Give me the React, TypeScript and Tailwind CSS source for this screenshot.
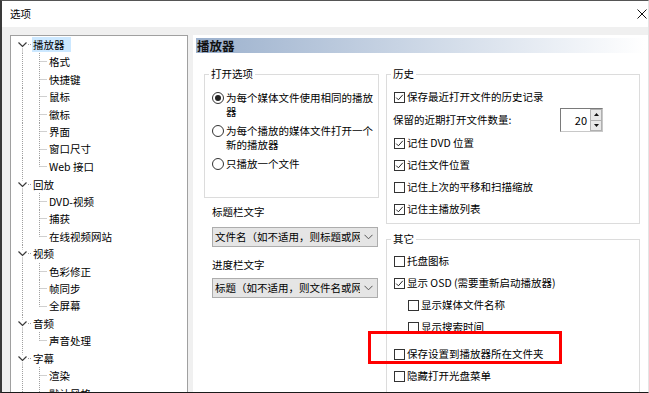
import React from 'react';

type TreeItem = { label: string; level: 0 | 1; first?: boolean; last?: boolean; selected?: boolean };

const ROW_H = 17.45;

const tree: TreeItem[] = [
  { label: '播放器', level: 0, first: true, selected: true },
  { label: '格式', level: 1 },
  { label: '快捷键', level: 1 },
  { label: '鼠标', level: 1 },
  { label: '徽标', level: 1 },
  { label: '界面', level: 1 },
  { label: '窗口尺寸', level: 1 },
  { label: 'Web 接口', level: 1, last: true },
  { label: '回放', level: 0 },
  { label: 'DVD-视频', level: 1 },
  { label: '捕获', level: 1 },
  { label: '在线视频网站', level: 1, last: true },
  { label: '视频', level: 0 },
  { label: '色彩修正', level: 1 },
  { label: '帧同步', level: 1 },
  { label: '全屏幕', level: 1, last: true },
  { label: '音频', level: 0 },
  { label: '声音处理', level: 1, last: true },
  { label: '字幕', level: 0 },
  { label: '渲染', level: 1 },
  { label: '默认风格', level: 1 },
];

const dot = { stroke: '#a0a0a0', strokeWidth: 1, strokeDasharray: '1 1' };

function TreeRow({ item }: { item: TreeItem }) {
  const c = 8.5;
  if (item.level === 0) {
    return (
      <div className="flex items-center h-[17.45px]">
        <svg width="21" height={ROW_H} className="shrink-0">
          {!item.first && <line x1="11.5" y1="0" x2="11.5" y2={c - 4} {...dot} />}
          <line x1="11.5" y1={c + 4} x2="11.5" y2={ROW_H} {...dot} />
          <polyline points={`7.5,${c - 2} 11.5,${c + 2} 15.5,${c - 2}`} fill="none" stroke="#3a3a3a" strokeWidth="1.2" />
          <line x1="17" y1={c} x2="21" y2={c} {...dot} />
        </svg>
        <span className={`pl-[1px] pr-[6px] leading-[15px] ${item.selected ? 'bg-[#cce8ff]' : ''}`}>{item.label}</span>
      </div>
    );
  }
  return (
    <div className="flex items-center h-[17.45px]">
      <svg width="37" height={ROW_H} className="shrink-0">
        <line x1="11.5" y1="0" x2="11.5" y2={ROW_H} {...dot} />
        <line x1="28.5" y1="0" x2="28.5" y2={item.last ? c : ROW_H} {...dot} />
        <line x1="28.5" y1={c} x2="36" y2={c} {...dot} />
      </svg>
      <span className="ml-[1px]">{item.label}</span>
    </div>
  );
}

function Check({ checked }: { checked?: boolean }) {
  return (
    <span className="w-[11px] h-[11px] shrink-0 border border-[#333] bg-white flex items-center justify-center">
      {checked && (
        <svg width="9" height="9" viewBox="0 0 9 9">
          <polyline points="1.2,4.6 3.4,6.8 7.8,1.8" fill="none" stroke="#222" strokeWidth="1" />
        </svg>
      )}
    </span>
  );
}

function CheckRow({ label, checked, className = '' }: { label: string; checked?: boolean; className?: string }) {
  return (
    <div className={`flex items-center h-[22px] ${className}`}>
      <Check checked={checked} />
      <span className="ml-[2px] whitespace-nowrap">{label}</span>
    </div>
  );
}

function Radio({ label, selected }: { label: string; selected?: boolean }) {
  return (
    <div className="flex items-start">
      <span className="h-[14px] flex items-center shrink-0">
        <span className="w-[12px] h-[12px] rounded-full border border-[#333] bg-white flex items-center justify-center">
          {selected && <span className="w-[6px] h-[6px] rounded-full bg-[#222]" />}
        </span>
      </span>
      <span className="ml-[2px] flex-1 leading-[14px]">{label}</span>
    </div>
  );
}

function Combo({ text }: { text: string }) {
  return (
    <div className="ml-[8px] w-[166px] h-[20px] bg-[#e5e5e5] border border-[#adadad] flex items-center overflow-hidden">
      <span className="pl-[2px] flex-1 whitespace-nowrap overflow-hidden leading-[18px]">{text}</span>
      <svg width="9" height="6" viewBox="0 0 9 6" className="shrink-0 mx-[4px]">
        <polyline points="0.5,0.8 4.5,4.8 8.5,0.8" fill="none" stroke="#555" strokeWidth="1" />
      </svg>
    </div>
  );
}

export default function App() {
  return (
    <div className="relative w-[649px] h-[393px] overflow-hidden bg-[#f0f0f0] border-t border-l-2 border-b border-r border-t-[#555] border-l-[#3a3a3a] border-b-[#1a1a1a] border-r-[#e4e4e4] flex flex-col text-[10.5px] text-black font-['Noto_Sans_CJK_SC','Noto_Sans',sans-serif]">
      <div className="h-[26px] shrink-0 bg-white flex items-center justify-between pl-[8px] pr-[1px]">
        <span>选项</span>
        <svg width="10" height="10" viewBox="0 0 10 10">
          <line x1="0.5" y1="0.5" x2="9.5" y2="9.5" stroke="#111" strokeWidth="1" />
          <line x1="9.5" y1="0.5" x2="0.5" y2="9.5" stroke="#111" strokeWidth="1" />
        </svg>
      </div>

      <div className="flex flex-1 min-h-0 pt-[8px]">
        <div className="ml-[8px] w-[178px] h-[400px] shrink-0 bg-white border border-[#a0a0a0]">
          {tree.map((item) => (
            <TreeRow key={item.label} item={item} />
          ))}
        </div>

        <div className="ml-[5px] flex-1 h-[400px] bg-white">
          <div className="mx-[3px] mt-[3px] h-[15px] bg-linear-to-r from-[#9cb1cd] to-white flex items-center pl-[1px]">
            <span className="text-[12.5px] font-bold leading-[15px] text-[#111]">播放器</span>
          </div>

          <div className="flex mt-[14px] pl-[11px] gap-[7px]">
            <div className="w-[175px] shrink-0">
              <fieldset className="h-[131px] border border-[#dcdcdc]">
                <legend className="ml-[4px] px-[2px] leading-[14px]">打开选项</legend>
                <div className="pt-[10px] pl-[7px] pr-[1px] flex flex-col gap-[5px]">
                  <Radio label="为每个媒体文件使用相同的播放器" selected />
                  <Radio label="为每个播放的媒体文件打开一个新的播放器" />
                  <Radio label="只播放一个文件" />
                </div>
              </fieldset>
              <div className="mt-[7px] pl-[8px] leading-[14px]">标题栏文字</div>
              <div className="mt-[8px]">
                <Combo text="文件名（如不适用，则标题或网站名）" />
              </div>
              <div className="mt-[11px] pl-[8px] leading-[14px]">进度栏文字</div>
              <div className="mt-[6px]">
                <Combo text="标题（如不适用，则文件名或网站名）" />
              </div>
            </div>

            <div className="w-[254px] shrink-0">
              <fieldset className="h-[157px] border border-[#dcdcdc]">
                <legend className="ml-[4px] px-[2px] leading-[14px]">历史</legend>
                <div className="pt-[5px] pl-[7px] pr-[36px]">
                  <CheckRow label="保存最近打开文件的历史记录" checked />
                  <div className="flex items-center justify-between h-[24px]">
                    <span className="-ml-[1px]">保留的近期打开文件数量:</span>
                    <div className="w-[43px] h-[24px] flex border border-[#7a7a7a] border-r-[#c8c8c8] border-b-[#c8c8c8] bg-white">
                      <span className="flex-1 text-right pr-[3px] leading-[22px] text-[11px]">20</span>
                      <div className="w-[12px] flex flex-col">
                        <div className="flex-1 bg-[#e8e8e8] border border-[#b0b0b0] flex items-center justify-center">
                          <svg width="5" height="3" viewBox="0 0 5 3"><polygon points="0,3 2.5,0 5,3" fill="#111" /></svg>
                        </div>
                        <div className="flex-1 bg-[#e8e8e8] border border-t-0 border-[#b0b0b0] flex items-center justify-center">
                          <svg width="5" height="3" viewBox="0 0 5 3"><polygon points="0,0 2.5,3 5,0" fill="#111" /></svg>
                        </div>
                      </div>
                    </div>
                  </div>
                  <CheckRow label="记住 DVD 位置" checked />
                  <CheckRow label="记住文件位置" checked />
                  <CheckRow label="记住上次的平移和扫描缩放" />
                  <CheckRow label="记住主播放列表" checked />
                </div>
              </fieldset>

              <fieldset className="mt-[8px] h-[200px] border border-[#dcdcdc]">
                <legend className="ml-[4px] px-[2px] leading-[14px]">其它</legend>
                <div className="pt-[4px] pl-[7px]">
                  <CheckRow label="托盘图标" />
                  <CheckRow label="显示 OSD (需要重新启动播放器)" checked />
                  <CheckRow label="显示媒体文件名称" className="ml-[14px]" />
                  <CheckRow label="显示搜索时间" className="ml-[14px] h-[20px]" />
                  <CheckRow label="保存设置到播放器所在文件夹" className="mt-[5px]" />
                  <CheckRow label="隐藏打开光盘菜单" />
                  <CheckRow label="在任务栏显示播放进度" />
                </div>
              </fieldset>
            </div>
          </div>
        </div>
      </div>

      <div className="absolute left-[366px] top-[330px] w-[194px] h-[33px] border-[3px] border-[#ff0000]" />
    </div>
  );
}
